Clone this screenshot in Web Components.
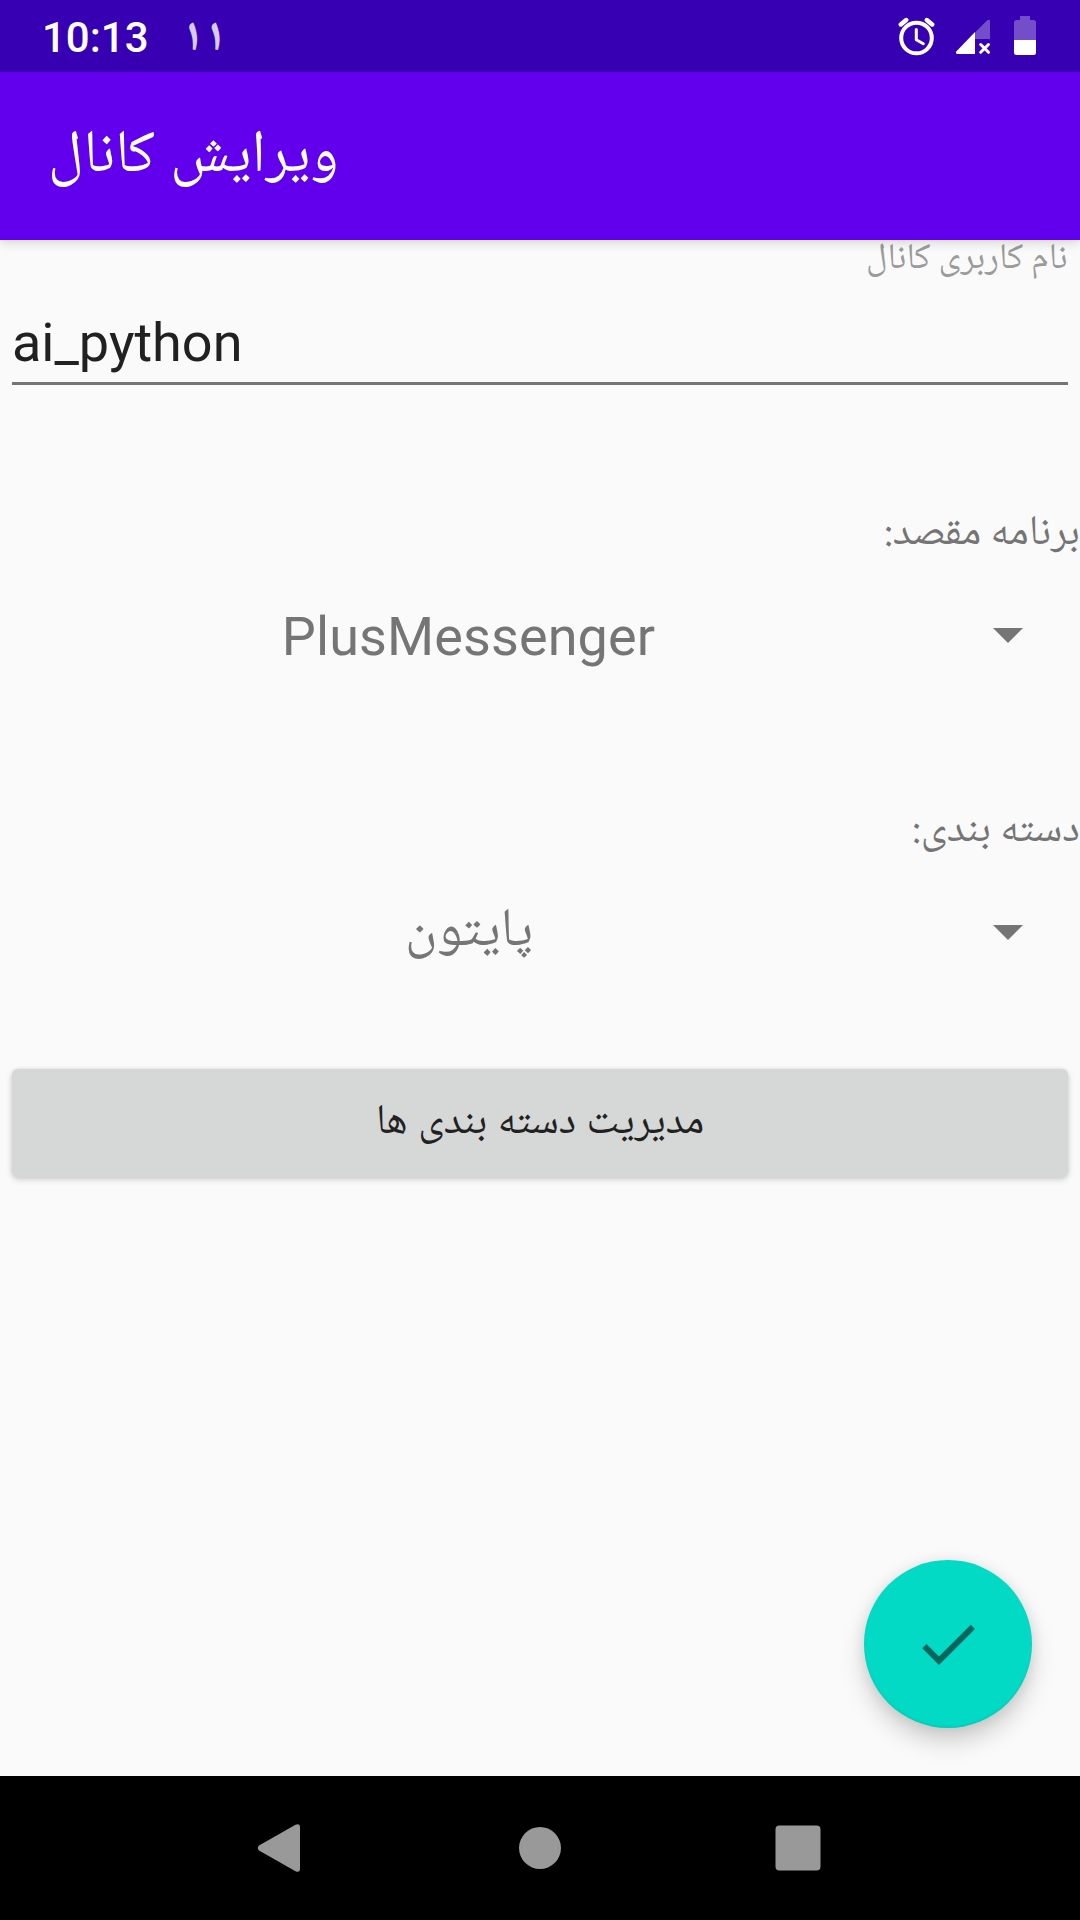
<!DOCTYPE html>
<html lang="fa">
<head>
<meta charset="utf-8">
<title>ویرایش کانال</title>
<style>
html,body{margin:0;height:100%;background:#fafafa}
body{font-family:Roboto,"Noto Naskh Arabic",sans-serif;overflow:hidden}
</style>
</head>
<body>
<channel-editor></channel-editor>
<script>
const define = (name, html, ready) => customElements.define(name, class extends HTMLElement {
  constructor() {
    super();
    this.attachShadow({mode: 'open'}).innerHTML = html;
  }
  connectedCallback() { if (ready) ready(this); }
});

// A single line of Persian text, set to a given width.
define('fa-text', `
<style>
:host{display:block;flex:none;font-family:"Noto Naskh Arabic",serif;direction:ltr;white-space:nowrap;text-align:left}
span{display:inline-block;transform-origin:0 50%}
</style><span dir="rtl"><slot></slot></span>`, el => {
  const s = el.shadowRoot.querySelector('span');
  const w = +el.getAttribute('width');
  el.style.width = w + 'px';
  s.style.transform = `scaleX(${w / s.offsetWidth})`;
});

define('status-bar', `
<style>
:host{display:flex;box-sizing:border-box;height:72px;background:#3700b3;color:#fff;padding:0 44px 0 42px;justify-content:space-between;position:relative;z-index:2}
.l{display:flex}
.clock{font:500 42px/75px Roboto,sans-serif;width:140px}
.n{font:700 46px/80px "Noto Naskh Arabic",serif;height:72px;letter-spacing:5px;opacity:.8;direction:ltr;transform:skewX(-4deg)}
svg{display:block}
</style>
<div class="l"><div class="clock">10:13</div><div class="n">۱۱</div></div>
<svg width="138" height="72" viewBox="898 0 138 72">
<circle cx="916.5" cy="38" r="15.3" fill="none" stroke="#fff" stroke-width="4"/>
<path d="M916.3 29.5V39.8L923.3 43.8" fill="none" stroke="#fff" stroke-width="3" stroke-linecap="round" stroke-linejoin="round"/>
<path d="M900.8 24.5L906.2 20M926.8 20L932.2 24.5" stroke="#fff" stroke-width="4.4" stroke-linecap="round"/>
<path d="M975 32.6L987 20.6Q990 18.6 990 21.5V39H975z" fill="#fff" opacity=".3"/>
<path d="M975 32V54H957.5Q955 53.5 956.5 51.2z" fill="#fff"/>
<path d="M980.7 44.5l7.8 7.8M988.5 44.5l-7.8 7.8" stroke="#fff" stroke-width="3" stroke-linecap="round"/>
<path d="M1014 40V22.500q0-2.500 2.500-2.500h3.500v-4h10v4h3.500q2.500 0 2.500 2.500V40z" fill="#fff" opacity=".3"/>
<path d="M1014 40h22v12.500q0 2.500-2.500 2.500h-17q-2.500 0-2.500-2.500z" fill="#fff"/>
</svg>`);

define('app-bar', `
<style>
:host{display:flex;box-sizing:border-box;height:168px;background:#6200ee;color:#fff;padding:44px 48px 0;position:relative;z-index:1;box-shadow:0 3px 10px rgba(0,0,0,.15)}
fa-text{font-size:60px;line-height:84px;word-spacing:-3px}
fa-text{word-spacing:2px}
</style><fa-text width="291"><slot></slot></fa-text>`);

define('edit-field', `
<style>
:host{display:block;padding:0 12px}
.h{display:flex;justify-content:flex-end;height:40px;color:#9b9b9b}
.h fa-text{font-size:36px;line-height:42px}
.v{margin-top:31px;border-bottom:3px solid #757575;padding-bottom:7px;font:54px/64px Roboto,sans-serif;color:#212121}
</style>
<div class="h"><fa-text width="202"><slot name="hint"></slot></fa-text></div>
<div class="v"><slot></slot></div>`);

define('spin-box', `
<style>
:host{display:block;color:#757575}
.l{display:flex;justify-content:flex-end;height:60px}
.l ::slotted(*){font-size:42px;line-height:60px}
.r{display:flex;align-items:center;height:141px}
.t{width:937px;display:flex;justify-content:center;font-size:54px;line-height:64px}
svg{margin-left:56px;display:block}
</style>
<div class="l"><slot name="label"></slot></div>
<div class="r"><div class="t"><slot></slot></div><svg width="30" height="15" viewBox="0 0 30 15"><path d="M0 0h30L15 15z" fill="#757575"/></svg></div>`);

define('wide-button', `
<style>
:host{display:flex;justify-content:center;box-sizing:border-box;height:108px;margin:0 12px;padding-top:25px;border-radius:6px;background:#d6d7d7;color:#212121;box-shadow:0 3px 6px rgba(0,0,0,.15),0 0 4px rgba(0,0,0,.1)}
fa-text{font-size:42px;line-height:60px;word-spacing:1.5px}
</style><fa-text width="328"><slot></slot></fa-text>`);

define('done-fab', `
<style>
:host{position:absolute;right:48px;bottom:48px;width:168px;height:168px;border-radius:50%;background:#03dac5;display:grid;place-items:center;box-shadow:0 14px 26px -2px rgba(0,0,0,.2),0 0 14px rgba(0,0,0,.08),inset 0 -2px 2px rgba(0,0,0,.06)}
</style><svg width="72" height="72" viewBox="0 0 24 24"><path fill="#02665c" d="M9 16.170L4.830 12l-1.420 1.410L9 19 21 7l-1.410-1.410z"/></svg>`);

define('nav-bar', `
<style>
:host{display:flex;height:144px;background:#000;align-items:center;justify-content:space-between;padding:0 259px 0 257px}
svg{display:block}
.home{margin-left:4px}
</style>
<svg width="43" height="48" viewBox="0 0 43 48"><path d="M2 21.500L38.500.800Q43-1 43 3.500V44.500Q43 49 38.500 47.200L2 26.500Q-.500 24 2 21.500z" fill="#999"/></svg>
<svg class="home" width="42" height="42"><circle cx="21" cy="21" r="21" fill="#999"/></svg>
<svg width="46" height="46"><rect x=".5" y=".5" width="45" height="45" rx="4" fill="#999"/></svg>`);

define('channel-editor', `
<style>
:host{display:flex;flex-direction:column;width:1080px;height:1920px;overflow:hidden}
main{flex:1;position:relative;display:flex;flex-direction:column;background:#fafafa}
.a{margin-top:120px}.b{margin-top:96px}
wide-button{margin-top:66px}
.p{position:relative;top:1px;letter-spacing:.1px}
</style>
<status-bar></status-bar>
<app-bar>ویرایش کانال</app-bar>
<main>
<edit-field><span slot="hint">نام کاربری کانال</span>ai_python</edit-field>
<spin-box class="a"><fa-text slot="label" width="196">برنامه مقصد:</fa-text><span class="p">PlusMessenger</span></spin-box>
<spin-box class="b"><fa-text slot="label" width="168">دسته بندی:</fa-text><fa-text width="128">پایتون</fa-text></spin-box>
<wide-button>مدیریت دسته بندی ها</wide-button>
<done-fab></done-fab>
</main>
<nav-bar></nav-bar>`);
</script>
</body>
</html>
